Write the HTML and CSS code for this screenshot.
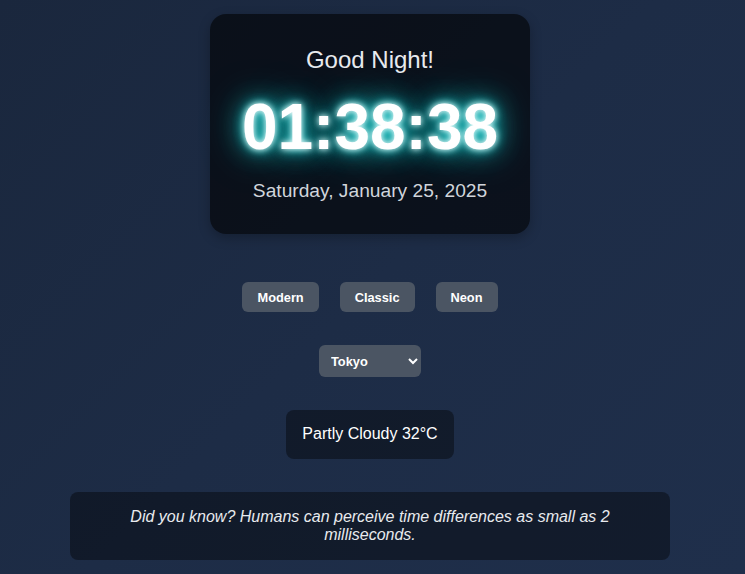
FILE: index.html
```html
<!DOCTYPE html>
<html lang="en">
<head>
<meta charset="utf-8">
<title>Clock</title>
<link rel="stylesheet" href="styles.css">
</head>
<body>
<main class="page">
  <section class="clock-card">
    <h2 class="greeting">Good Night!</h2>
    <div class="time">01:38:38</div>
    <div class="date">Saturday, January 25, 2025</div>
  </section>

  <div class="themes">
    <button class="theme-btn">Modern</button>
    <button class="theme-btn">Classic</button>
    <button class="theme-btn">Neon</button>
  </div>

  <div class="zone">
    <select class="zone-select">
      <option>Local</option>
      <option>New York</option>
      <option>London</option>
      <option selected>Tokyo</option>
      <option>Sydney</option>
    </select>
  </div>

  <div class="weather">Partly Cloudy 32°C</div>

  <div class="fact">Did you know? Humans can perceive time differences as small as 2 milliseconds.</div>
</main>
</body>
</html>
```

FILE: styles.css
```css
html, body {
  margin: 0;
  height: 100%;
}

body {
  background: linear-gradient(135deg, #1a273d 0%, #1d2c46 50%, #1f2f4b 100%);
  font-family: "Liberation Sans", Arial, sans-serif;
  color: #ffffff;
  overflow: hidden;
}

.page {
  display: flex;
  flex-direction: column;
  align-items: center;
  padding: 14px 5px 0 0;
}

.clock-card {
  width: 320px;
  box-sizing: border-box;
  padding: 32px 16px;
  background: rgba(0, 0, 0, 0.6);
  border-radius: 16px;
  text-align: center;
  box-shadow: 0 4px 12px rgba(0, 0, 0, 0.25);
}

.greeting {
  margin: 0 0 16px;
  font-size: 24px;
  font-weight: normal;
  color: #e8eaee;
}

.time {
  font-size: 64px;
  font-weight: bold;
  color: #ffffff;
  text-shadow: 0 0 6px #ffffff, 0 0 12px #2ee6e6, 0 0 24px #14c8c8, 0 0 40px rgba(20, 200, 200, 0.7);
  margin-bottom: 16px;
}

.date {
  font-size: 19.2px;
  color: #d1d5db;
}

.themes {
  display: flex;
  gap: 21px;
  margin-top: 48px;
}

.theme-btn {
  font-family: "Liberation Sans", Arial, sans-serif;
  font-size: 12.8px;
  font-weight: bold;
  color: #ffffff;
  background: #4b5563;
  border: none;
  border-radius: 6px;
  height: 30px;
  padding: 0 15px;
}

.zone {
  margin-top: 33px;
}

.zone-select {
  font-family: "Liberation Sans", Arial, sans-serif;
  font-size: 12.8px;
  font-weight: bold;
  color: #ffffff;
  background: #4b5563;
  border: none;
  border-radius: 6px;
  height: 32px;
  width: 102px;
  padding: 0 8px;
}

.weather {
  margin-top: 33px;
  padding: 15px 16px 16px;
  font-size: 16px;
  background: rgba(0, 0, 0, 0.4);
  border-radius: 8px;
  color: #ffffff;
}

.fact {
  margin-top: 33px;
  width: 600px;
  box-sizing: border-box;
  padding: 16px 16px;
  font-size: 16px;
  font-style: italic;
  text-align: center;
  background: rgba(0, 0, 0, 0.4);
  border-radius: 8px;
  color: #e8eaee;
}
```
